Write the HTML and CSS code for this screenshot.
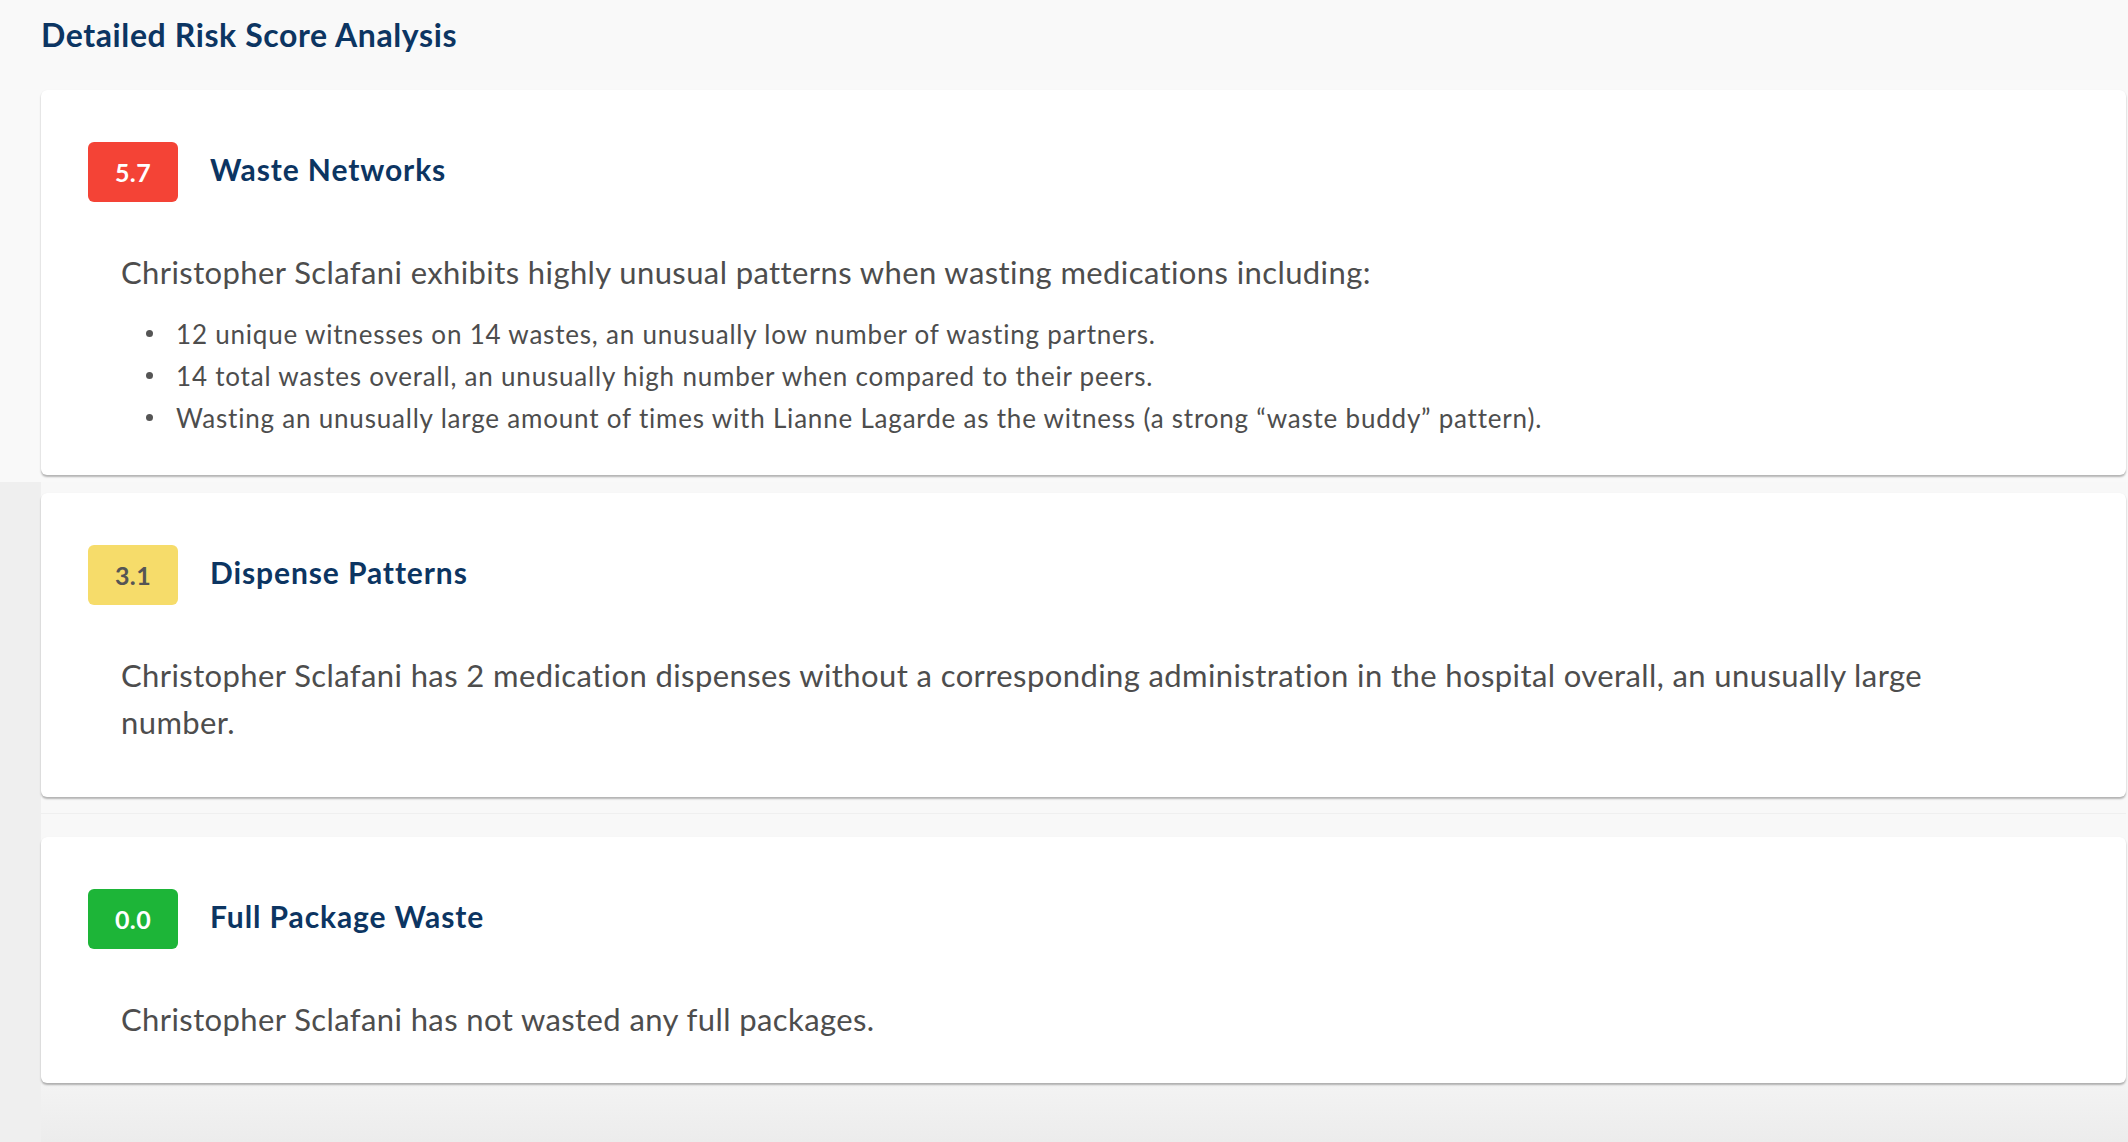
FILE: index.html
```html
<!DOCTYPE html>
<html lang="en">
<head>
<meta charset="utf-8">
<title>Detailed Risk Score Analysis</title>
<link rel="stylesheet" href="styles.css">
</head>
<body>
<div class="top">
  <h2 class="title">Detailed Risk Score Analysis</h2>
  <div class="card card-first">
    <div class="card-head">
      <div class="badge badge-red">5.7</div>
      <h3 class="card-title">Waste Networks</h3>
    </div>
    <div class="card-body">
      <p class="lead">Christopher Sclafani exhibits highly unusual patterns when wasting medications including:</p>
      <ul class="points">
        <li>12 unique witnesses on 14 wastes, an unusually low number of wasting partners.</li>
        <li>14 total wastes overall, an unusually high number when compared to their peers.</li>
        <li>Wasting an unusually large amount of times with Lianne Lagarde as the witness (a strong “waste buddy” pattern).</li>
      </ul>
    </div>
  </div>
</div>
<div class="lower">
  <div class="rail"></div>
  <div class="content">
    <div class="card card-second">
      <div class="card-head">
        <div class="badge badge-yellow">3.1</div>
        <h3 class="card-title">Dispense Patterns</h3>
      </div>
      <div class="card-body">
        <p class="lead">Christopher Sclafani has 2 medication dispenses without a corresponding administration in the hospital overall, an unusually large number.</p>
      </div>
    </div>
    <div class="divider"></div>
    <div class="card card-third">
      <div class="card-head">
        <div class="badge badge-green">0.0</div>
        <h3 class="card-title">Full Package Waste</h3>
      </div>
      <div class="card-body">
        <p class="lead">Christopher Sclafani has not wasted any full packages.</p>
      </div>
    </div>
  </div>
</div>
</body>
</html>
```
FILE: styles.css
```css
html, body {
  margin: 0;
  padding: 0;
}
body {
  background: #f9f9f9;
  font-family: Lato, "Liberation Sans", Arial, sans-serif;
  color: #4d4d4d;
  height: 1142px;
  overflow: hidden;
  display: flex;
  flex-direction: column;
}
.top {
  padding: 0 2px 7px 41px;
  background: #f9f9f9;
}
.title {
  margin: 0;
  padding-top: 16px;
  height: 90px;
  box-sizing: border-box;
  font-size: 32px;
  letter-spacing: 0.6px;
  line-height: 37px;
  font-weight: 700;
  color: #0c3562;
}
.card {
  background: #ffffff;
  border-radius: 6px;
  box-shadow: 0 2px 2px rgba(0, 0, 0, 0.28), 0 0 1px rgba(0, 0, 0, 0.06);
  padding: 52px 47px 36px 47px;
}
.card-head {
  display: flex;
  align-items: center;
  gap: 32px;
}
.badge {
  width: 90px;
  height: 60px;
  border-radius: 6px;
  display: flex;
  align-items: center;
  justify-content: center;
  font-size: 25px;
  letter-spacing: 0.4px;
  font-weight: 700;
  color: #ffffff;
}
.badge-red { background: #f44336; }
.badge-yellow { background: #f6dc6a; color: #555555; }
.badge-green { background: #1db538; }
.card-title {
  margin: -6px 0 0 0;
  font-size: 30px;
  letter-spacing: 0.9px;
  font-weight: 700;
  color: #0c3562;
  line-height: 36px;
}
.card-body {
  padding-left: 33px;
  max-width: 1830px;
}
.lead {
  margin: 47px 0 0 0;
  font-size: 31px;
  letter-spacing: 0.4px;
  line-height: 47.5px;
}
.points {
  list-style: none;
  margin: 16px 0 0 0;
  padding: 0;
  font-size: 26px;
  letter-spacing: 0.8px;
  line-height: 42px;
}
.points li {
  display: flex;
  align-items: center;
}
.points li::before {
  content: "";
  flex: none;
  width: 7px;
  height: 7px;
  border-radius: 50%;
  background: #555555;
  margin: 0 23px 0 25px;
}
.card-second { padding-bottom: 50px; }
.card-third { padding-bottom: 40px; }
.lower {
  flex: 1;
  display: flex;
}
.rail {
  width: 41px;
  flex: none;
  background: #efefef;
}
.content {
  flex: 1;
  padding: 11px 2px 0 0;
  background: linear-gradient(to bottom, #f8f8f8 0, #f8f8f8 85%, #ececec 100%);
}
.divider {
  height: 1px;
  background: #efefef;
  margin: 16px 0 23px 0;
}
```
